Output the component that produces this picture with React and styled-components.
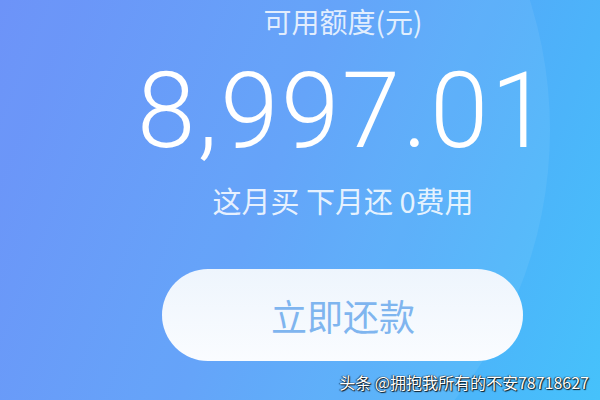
import React from "react";
import styled, { createGlobalStyle } from "styled-components";

const Global = createGlobalStyle`
  html, body { margin: 0; padding: 0; }
  body { font-family: "Noto Sans CJK SC", "Noto Sans", sans-serif; }
`;

const Screen = styled.div`
  position: relative;
  width: 600px;
  height: 400px;
  overflow: hidden;
  background: linear-gradient(112deg, #628bf8 0%, #5a9ef9 45%, #4cb4fa 80%, #46c2fb 100%);
  display: flex;
  flex-direction: column;
  align-items: center;
  font-family: "Noto Sans CJK SC", "Noto Sans", sans-serif;
`;

const Glow = styled.div`
  position: absolute;
  left: -310px;
  top: -300px;
  width: 860px;
  height: 860px;
  border-radius: 50%;
  background: rgba(255, 255, 255, 0.07);
  pointer-events: none;
`;

const Content = styled.div`
  position: relative;
  display: flex;
  flex-direction: column;
  align-items: center;
  padding-top: 2px;
  margin-left: 86px;
`;

const Label = styled.div`
  font-size: 28px;
  line-height: 38px;
  color: rgba(255, 255, 255, 0.82);
`;

const Amount = styled.div`
  margin-top: 12px;
  font-family: Roboto, "Liberation Sans", sans-serif;
  font-weight: 300;
  font-size: 105px;
  line-height: 120px;
  color: #ffffff;
  letter-spacing: 2.5px;
  margin-right: -2.5px;
`;

const Note = styled.div`
  margin-top: 10px;
  font-size: 29px;
  line-height: 36px;
  color: rgba(255, 255, 255, 0.85);
  white-space: pre;
`;

const PayButton = styled.button`
  margin-top: 51px;
  width: 361px;
  height: 92px;
  border: none;
  border-radius: 46px;
  background: linear-gradient(180deg, #eef5fd 0%, #fafcff 100%);
  color: #7fb5ef;
  font-family: "Noto Sans CJK SC", "Noto Sans", sans-serif;
  font-size: 36px;
  display: flex;
  align-items: center;
  justify-content: center;
  padding: 0;
  cursor: pointer;
`;

const Watermark = styled.div`
  position: absolute;
  right: 11px;
  bottom: 8px;
  font-size: 16px;
  line-height: 20px;
  color: #ffffff;
  font-family: "Noto Sans CJK SC", "Liberation Sans", sans-serif;
  text-shadow: 0 0 1px #000, 1px 1px 1px rgba(0, 0, 0, 0.85), -1px 0 1px rgba(0, 0, 0, 0.5);
  white-space: pre;
`;

export default function App() {
  return (
    <>
      <Global />
      <Screen>
        <Glow />
        <Content>
          <Label>可用额度(元)</Label>
          <Amount>8,997.01</Amount>
          <Note>这月买 下月还 0费用</Note>
          <PayButton>立即还款</PayButton>
        </Content>
        <Watermark>头条 @拥抱我所有的不安78718627</Watermark>
      </Screen>
    </>
  );
}
